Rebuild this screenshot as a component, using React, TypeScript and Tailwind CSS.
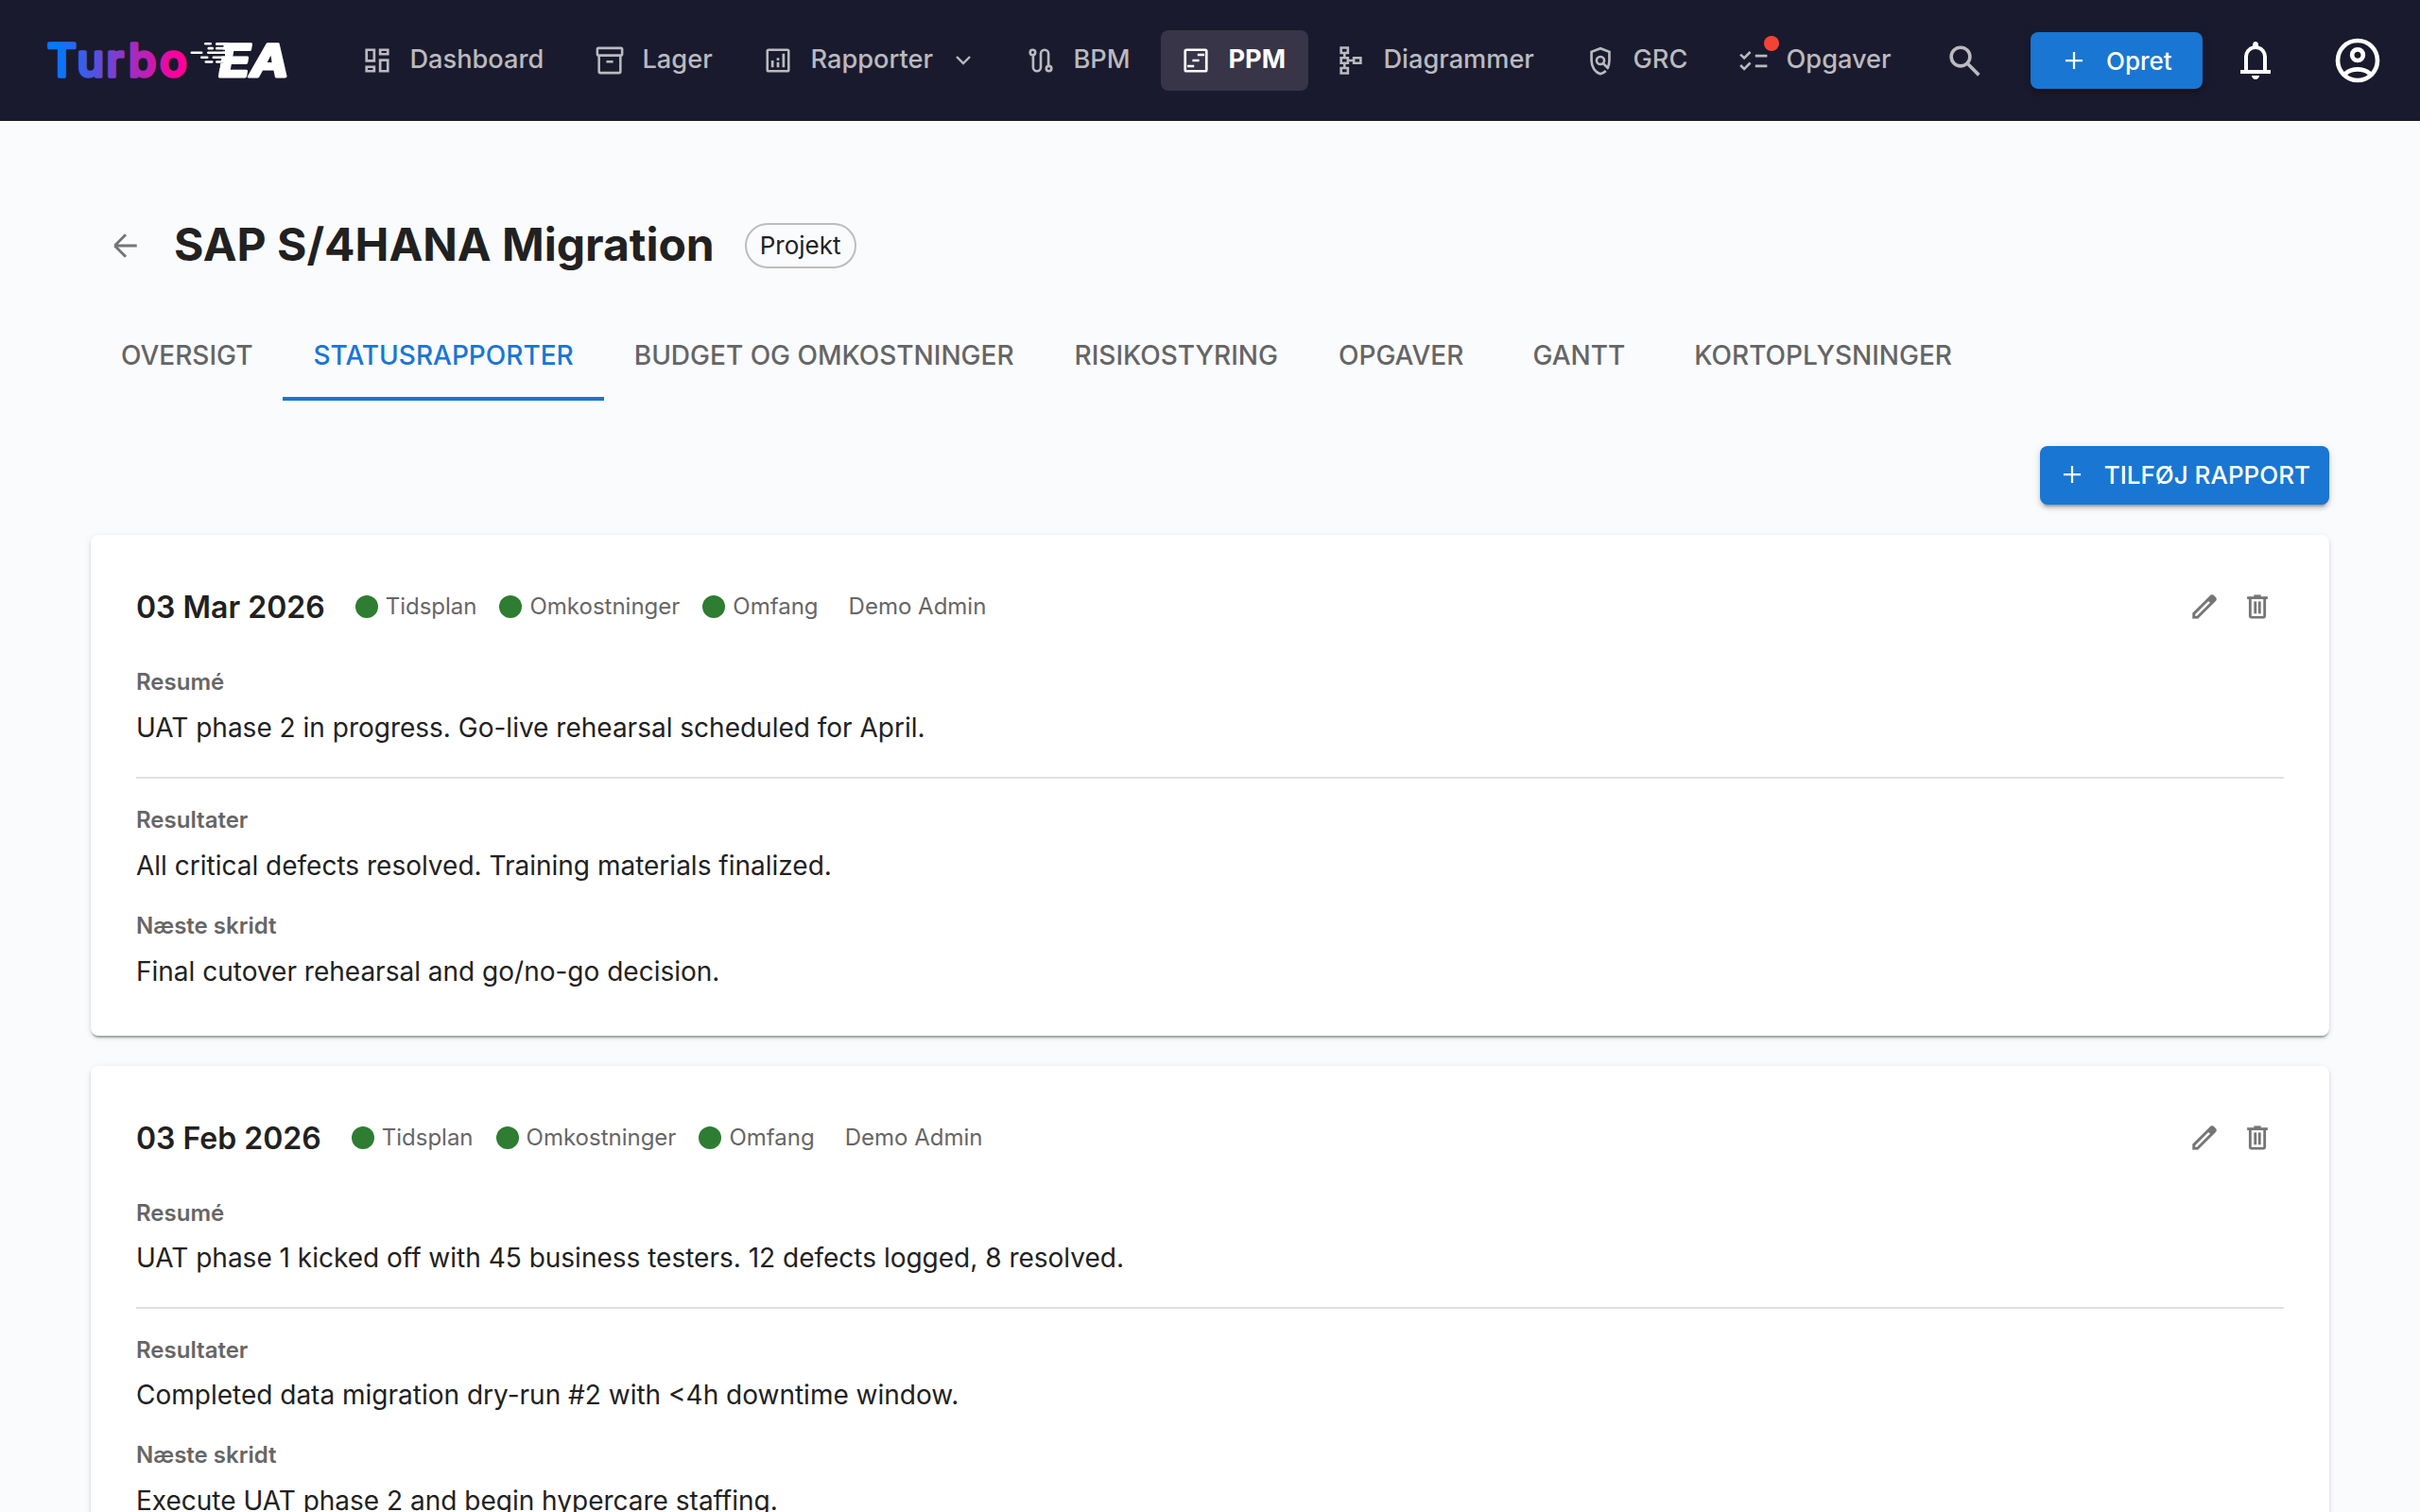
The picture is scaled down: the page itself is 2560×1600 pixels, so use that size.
import React from 'react';

interface IconProps {
	size?: string;
	children: React.ReactNode;
}

function Icon({ size = 'h-9 w-9', children }: IconProps) {
	return (
		<svg viewBox="0 0 960 960" fill="currentColor" className={`${size} shrink-0`} aria-hidden="true">
			{children}
		</svg>
	)
}

const DashboardIcon = (
	<path d="M528 336V144h288v192H528ZM144 528V144h288v384H144Zm384 288V432h288v384H528Zm-384 0V624h288v192H144Zm72-360h144V216H216v240Zm384 288h144V504H600v240Zm0-480h144v-48H600v48ZM216 744h144v-48H216v48Z" />
);

const InventoryIcon = (
	<>
		<g fill="none" stroke="currentColor" strokeWidth="68">
			<rect x="130" y="130" width="700" height="206" rx="34" />
			<path d="M178 336v458q0 36 36 36h532q36 0 36-36V336" />
		</g>
		<path d="M384 480h192v68H384z" />
	</>
);

const AnalyticsIcon = (
	<>
		<rect x="180" y="180" width="600" height="600" rx="36" fill="none" stroke="currentColor" strokeWidth="68" />
		<path d="M288 480h72v192h-72zM444 528h72v144h-72zM444 408h72v72h-72zM600 288h72v384h-72z" />
	</>
);

const RouteIcon = (
	<g fill="none" stroke="currentColor" strokeWidth="70">
		<circle cx="252" cy="252" r="73" />
		<circle cx="708" cy="708" r="73" />
		<path d="M264 325v347a108 108 0 0 0 216 0V288a108 108 0 0 1 216 0v347" />
	</g>
);

const TimelineIcon = (
	<>
		<rect x="180" y="180" width="600" height="600" rx="36" fill="none" stroke="currentColor" strokeWidth="72" />
		<path d="M528 288h192v64H528zM384 448h192v64H384zM240 608h192v64H240z" />
	</>
);

const SchemaIcon = (
	<g fill="none" stroke="currentColor" strokeWidth="70">
		<path d="M204 120h192v148H204zM204 406h192v148H204zM204 692h192v148H204zM564 406h192v148H564z" />
		<path d="M300 268v138M300 554v138M396 480h168" />
	</g>
);

const PolicyIcon = (
	<g fill="none" stroke="currentColor" strokeWidth="70">
		<path d="M634 772Q566 838 480 860 372 828 300 724 228 618 228 480V236l252-96 252 96v244q0 122-56 216" />
		<circle cx="480" cy="480" r="108" />
		<path d="M552 556l160 156" />
	</g>
);

const ChecklistIcon = (
	<>
		<path d="M528 312h336v72H528zM528 600h336v72H528z" />
		<path d="M110 308l106 104 172-172M110 614l106 104 172-172" fill="none" stroke="currentColor" strokeWidth="68" />
	</>
);

const SearchIcon = (
	<path d="M784 840 532 588q-30 24-69 38t-83 14q-109 0-184.500-75.500T120 380q0-109 75.500-184.500T380 120q109 0 184.500 75.500T640 380q0 44-14 83t-38 69l252 252-56 56ZM380 560q75 0 127.500-52.500T560 380q0-75-52.500-127.500T380 200q-75 0-127.500 52.500T200 380q0 75 52.500 127.500T380 560Z" />
);

const PlusIcon = <path d="M450 722V510H238v-60h212V238h60v212h212v60H510v212z" />;

const BellIcon = (
	<path d="M160 760v-80h80V400q0-83 50-147.500T420 168v-28q0-25 17.500-42.500T480 80q25 0 42.500 17.500T540 140v28q80 20 130 84.500T720 400v280h80v80H160Zm320 120q-33 0-56.500-23.500T400 800h160q0 33-23.500 56.500T480 880ZM320 680h320V400q0-66-47-113t-113-47q-66 0-113 47t-47 113v280Z" />
);

const AccountIcon = (
	<path d="M234 684q51-39 114-61.500T480 600q69 0 132 22.500T726 684q35-41 54.500-93T800 480q0-133-93.500-226.500T480 160q-133 0-226.500 93.500T160 480q0 59 19.500 111t54.500 93Zm246-164q-59 0-99.500-40.500T340 380q0-59 40.500-99.500T480 240q59 0 99.500 40.500T620 380q0 59-40.500 99.500T480 520Zm0 360q-83 0-156-31.500T197 763q-54-54-85.500-127T80 480q0-83 31.500-156T197 197q54-54 127-85.500T480 80q83 0 156 31.500T763 197q54 54 85.500 127T880 480q0 83-31.500 156T763 763q-54 54-127 85.500T480 880Zm0-80q53 0 100-15.500t86-44.500q-39-29-86-44.500T480 680q-53 0-100 15.500T294 740q39 29 86 44.500T480 800Zm0-360q26 0 43-17t17-43q0-26-17-43t-43-17q-26 0-43 17t-17 43q0 26 17 43t43 17Z" />
);

const BackIcon = (
	<path d="M168 480 480 168M168 480l312 312M190 480h602" fill="none" stroke="currentColor" strokeWidth="76" />
);

const EditIcon = (
	<path d="M216 744h51l375-375-51-51-375 375v51Zm-72 72V663l498-498q11-11 23.840-16 12.830-5 27-5 14.160 0 27.160 5t24 16l51 51q11 11 16 24t5 26.540q0 14.450-5.020 27.540T795 318L297 816H144Z" stroke="currentColor" strokeWidth="8" />
);

const DeleteIcon = (
	<path d="M312 816q-29.700 0-50.850-21.150Q240 773.700 240 744V264h-48v-72h192v-48h192v48h192v72h-48v479.570Q720 774 698.850 795T648 816H312Zm336-552H312v480h336V264ZM384 672h72V336h-72v336Zm120 0h72V336h-72v336Z" stroke="currentColor" strokeWidth="4" />
);

interface NavItem {
	label: string;
	icon: React.ReactNode;
	width: string;
	active?: boolean;
	menu?: boolean;
	badge?: boolean;
}

const navItems: NavItem[] = [
	{ label: 'Dashboard', icon: DashboardIcon, width: 'w-[238px]' },
	{ label: 'Lager', icon: InventoryIcon, width: 'w-[170px]' },
	{ label: 'Rapporter', icon: AnalyticsIcon, width: 'w-[270px]', menu: true },
	{ label: 'BPM', icon: RouteIcon, width: 'w-[156px]' },
	{ label: 'PPM', icon: TimelineIcon, width: 'w-[156px]', active: true },
	{ label: 'Diagrammer', icon: SchemaIcon, width: 'w-[256px]' },
	{ label: 'GRC', icon: PolicyIcon, width: 'w-[154px]' },
	{ label: 'Opgaver', icon: ChecklistIcon, width: 'w-[208px]', badge: true },
];

function Logo() {
	return (
		<svg width="260" height="80" viewBox="48 24 260 80" className="shrink-0" role="img" aria-label="Turbo EA">
			<defs>
				<linearGradient id="turbo" gradientUnits="userSpaceOnUse" x1="58" y1="0" x2="188" y2="0">
					<stop offset="0" stopColor="#007aff" />
					<stop offset="1" stopColor="#ff0099" />
				</linearGradient>
			</defs>
			<text
				x="50 81.500 112.500 136 169"
				y="80.500"
				fontFamily="Inter"
				fontSize="47.500"
				fontWeight="500"
				fill="url(#turbo)"
				stroke="url(#turbo)"
				strokeWidth="3.600"
				strokeLinejoin="round"
			>
				Turbo
			</text>
			<g fill="#fff" stroke="#fff" strokeLinejoin="round">
				<text transform="translate(229 81) skewX(-10)" textLength="74" lengthAdjust="spacingAndGlyphs" fontFamily="Inter" fontSize="47" fontWeight="700" strokeWidth="3">EA</text>
			</g>
			<path d="M224 52.500h14v2h-14zM224 57h14v2.500h-14zM224 65h13l-1 2h-12zM224 69.500h9l-1 3h-8z" fill="#1a1a2e" />
			<g fill="#fff">
				<rect x="216" y="45" width="8" height="2.600" rx="1.300" />
				<rect x="228" y="45" width="14" height="3" rx="1.300" />
				<rect x="219.500" y="49.700" width="6.500" height="2.800" rx="1.300" />
				<rect x="228" y="49.700" width="12" height="2.800" rx="1.300" />
				<rect x="201.500" y="54.500" width="13" height="2.600" rx="1.300" />
				<rect x="219" y="54.500" width="24" height="2.600" rx="1.300" />
				<rect x="212" y="59.500" width="8.500" height="2.600" rx="1.300" />
				<rect x="224.500" y="59.500" width="14" height="2.600" rx="1.300" />
				<rect x="216.500" y="64.200" width="9" height="2.600" rx="1.300" />
				<rect x="228" y="64.200" width="12" height="2.600" rx="1.300" />
			</g>
		</svg>
	)
}

function NavButton(props: NavItem) {
	return (
		<button
			className={`${props.width} flex h-16 shrink-0 items-center gap-[17px] rounded-lg pl-[18.500px] text-[27.200px] whitespace-nowrap ${
				props.active ? 'bg-[#373547] font-bold text-white' : 'font-medium text-[#bababf]'
			}`}
		>
			<span className="relative">
				<Icon>{props.icon}</Icon>
				{props.badge && <span className="absolute -top-2 -right-[9px] h-4 w-4 rounded-full bg-[#f44336]" />}
			</span>
			<span className="pb-0.5">{props.label}</span>
			{props.menu && (
				<svg viewBox="0 0 16 10" className="ml-[7px]" width="16" height="10" fill="none" stroke="currentColor" strokeWidth="2.400">
					<path d="M1 1l7 7 7-7" />
				</svg>
			)}
		</button>
	)
}

function Header() {
	return (
		<header className="flex h-32 items-center bg-[#1a1a2e] pl-12">
			<Logo />
			<nav className="ml-[54px] flex gap-2">
				{navItems.map((item) => (
					<NavButton key={item.label} {...item} />
				))}
			</nav>
			<button className="ml-[31px] text-[#bababf]">
				<Icon size="h-[43px] w-[43px]">{SearchIcon}</Icon>
			</button>
			<button className="ml-12 flex h-[60px] w-[182px] items-center gap-4 rounded-lg bg-[#1976d2] pl-7 text-[26px] font-medium text-white shadow-[0_6px_2px_-4px_rgba(0,0,0,0.2),0_4px_4px_rgba(0,0,0,0.14),0_2px_10px_rgba(0,0,0,0.12)]">
				<Icon>{PlusIcon}</Icon>
				Opret
			</button>
			<button className="ml-8 text-white">
				<Icon size="h-12 w-12">{BellIcon}</Icon>
			</button>
			<button className="ml-14 text-white">
				<Icon size="h-14 w-14">{AccountIcon}</Icon>
			</button>
		</header>
	)
}

const tabs = ['Oversigt', 'Statusrapporter', 'Budget og omkostninger', 'Risikostyring', 'Opgaver', 'Gantt', 'Kortoplysninger'];

function Tabs() {
	return (
		<div className="flex h-24">
			{tabs.map((tab) => (
				<button
					key={tab}
					className={`min-w-[180px] border-b-4 px-8 pt-1 text-[28px] font-medium uppercase ${
						tab === 'Statusrapporter' ? 'border-[#1976d2] text-[#1976d2]' : 'border-transparent text-[#646566]'
					}`}
				>
					{tab}
				</button>
			))}
		</div>
	)
}

interface Report {
	date: string;
	summary: string;
	results: string;
	next: string;
}

const reports: Report[] = [
	{
		date: '03 Mar 2026',
		summary: 'UAT phase 2 in progress. Go-live rehearsal scheduled for April.',
		results: 'All critical defects resolved. Training materials finalized.',
		next: 'Final cutover rehearsal and go/no-go decision.',
	},
	{
		date: '03 Feb 2026',
		summary: 'UAT phase 1 kicked off with 45 business testers. 12 defects logged, 8 resolved.',
		results: 'Completed data migration dry-run #2 with <4h downtime window.',
		next: 'Execute UAT phase 2 and begin hypercare staffing.',
	},
];

function Section({ title, text }: { title: string; text: string }) {
	return (
		<div>
			<h3 className="mb-2 text-2xl leading-[39.840px] font-semibold text-[#666] group-last:mb-[7.500px]">{title}</h3>
			<p className="text-[28px] leading-[40.040px]">{text}</p>
		</div>
	)
}

function ReportCard({ report }: { report: Report }) {
	return (
		<article className="group rounded-lg bg-white p-12 shadow-[0_4px_2px_-2px_rgba(0,0,0,0.2),0_2px_2px_rgba(0,0,0,0.14),0_2px_6px_rgba(0,0,0,0.12)]">
			<div className="mb-8 flex h-14 items-center gap-8">
				<h2 className="pt-0.5 text-[32px] font-semibold">{report.date}</h2>
				<div className="flex gap-6 text-2xl text-[#666]">
					{['Tidsplan', 'Omkostninger', 'Omfang'].map((label) => (
						<span key={label} className="flex items-center gap-2">
							<span className="h-6 w-6 rounded-full bg-[#2e7d32]" />
							{label}
						</span>
					))}
				</div>
				<span className="text-2xl text-[#666]">Demo Admin</span>
				<div className="ml-auto flex text-[#757575]">
					<button className="p-2.5">
						<Icon>{EditIcon}</Icon>
					</button>
					<button className="p-2.5">
						<Icon>{DeleteIcon}</Icon>
					</button>
				</div>
			</div>
			<Section title="Resumé" text={report.summary} />
			<hr className="mt-8 mb-6 border-t-2 border-[#e0e0e0]" />
			<div className="flex flex-col gap-6">
				<Section title="Resultater" text={report.results} />
				<Section title="Næste skridt" text={report.next} />
			</div>
		</article>
	)
}

export default function App() {
	return (
		<div className="h-[1600px] w-[2560px] overflow-hidden bg-[#fafbfd] font-['Inter',sans-serif] text-[#212121]">
			<Header />
			<main className="px-24 pt-[100px]">
				<div className="flex h-16 items-center">
					<button className="ml-[18.500px] text-[#757575]">
						<Icon>{BackIcon}</Icon>
					</button>
					<h1 className="ml-[33.500px] pb-0.5 text-5xl font-bold whitespace-nowrap">SAP S/4HANA Migration</h1>
					<span className="ml-8 flex h-12 items-center rounded-full border-2 border-[#bdbdbd] px-3.5 pb-0.5 text-[26px]">Projekt</span>
				</div>
				<div className="mt-9">
					<Tabs />
				</div>
				<div className="mt-12 flex justify-end">
					<button className="flex h-[62px] items-center gap-4 rounded-lg bg-[#1976d2] pr-5 pb-0.5 pl-4 text-[26px] font-medium text-white uppercase shadow-[0_6px_2px_-4px_rgba(0,0,0,0.2),0_4px_4px_rgba(0,0,0,0.14),0_2px_10px_rgba(0,0,0,0.12)]">
						<Icon>{PlusIcon}</Icon>
						Tilføj rapport
					</button>
				</div>
				<div className="mt-8 flex flex-col gap-8">
					{reports.map((report) => (
						<ReportCard key={report.date} report={report} />
					))}
				</div>
			</main>
		</div>
	)
}
